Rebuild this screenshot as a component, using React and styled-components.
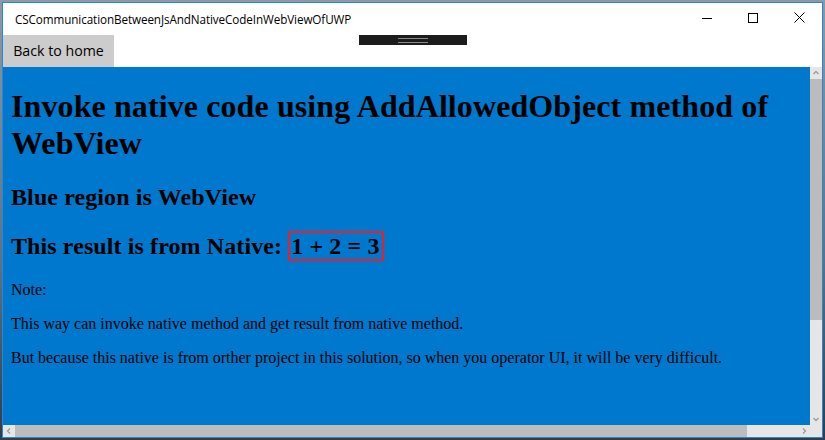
import React from "react";
import styled, { createGlobalStyle } from "styled-components";

const Global = createGlobalStyle`
  html, body { margin: 0; padding: 0; }
  body {
    width: 825px;
    height: 440px;
    overflow: hidden;
    background: linear-gradient(180deg, #8a9aa6 0%, #5d7180 60%, #2f3d48 100%);
  }
`;

const Desk = styled.div`
  width: 825px;
  height: 440px;
  padding: 2px 0 0 2px;
  box-sizing: border-box;
`;

const Window = styled.div`
  position: relative;
  width: 821px;
  height: 436px;
  box-sizing: border-box;
  border: 1px solid #2b87d6;
  background: #ffffff;
  display: grid;
  grid-template-rows: 32px 32px 1fr;
  overflow: hidden;
`;

const TitleBar = styled.div`
  display: flex;
  align-items: center;
  justify-content: space-between;
  background: #ffffff;
`;

const Title = styled.div`
  padding-left: 12px;
  padding-bottom: 1px;
  font-family: "Open Sans", "Noto Sans", sans-serif;
  font-size: 11.7px;
  letter-spacing: -0.1px;
  color: #000;
`;

const Controls = styled.div`
  display: flex;
  height: 100%;
`;

const CtrlBtn = styled.div`
  width: 46px;
  height: 100%;
  display: flex;
  align-items: center;
  justify-content: center;
  padding-bottom: 3px;
  box-sizing: border-box;
`;

const Toolbar = styled.div`
  display: flex;
  align-items: stretch;
  background: #ffffff;
`;

const HomeButton = styled.button`
  border: none;
  margin: 0;
  background: #cccccc;
  width: 111px;
  padding: 0 0 2px 0;
  font-family: "Open Sans", "Noto Sans", sans-serif;
  font-size: 14.2px;
  color: #000;
  text-align: center;
`;

const DebugBar = styled.div`
  position: absolute;
  left: 356px;
  top: 32px;
  width: 108px;
  height: 10px;
  background: #1c1c1c;
  display: flex;
  align-items: center;
  justify-content: center;
`;

const Grip = styled.div`
  width: 30px;
  height: 3px;
  border-top: 1px solid #8a8a8a;
  border-bottom: 1px solid #8a8a8a;
`;

const WebViewFrame = styled.div`
  display: grid;
  grid-template-columns: 1fr 12px;
  grid-template-rows: 1fr 12px;
  min-height: 0;
`;

const WebView = styled.div`
  background: #0078ce;
  overflow: hidden;
  padding: 1px 8px 0 8px;
  font-family: "Liberation Serif", "Times New Roman", serif;
  font-size: 16px;
  color: #000;
`;

const H1 = styled.h1`
  font-size: 32px;
  font-weight: bold;
  margin: 20px 0 21px 0;
  line-height: 37px;
  letter-spacing: 0.1px;
`;

const H2 = styled.h2`
  font-size: 24px;
  font-weight: bold;
  margin: 20px 0;
  line-height: 29px;
  letter-spacing: 0.1px;
`;

const Result = styled.span`
  border: 2px solid #e8202a;
  padding: 0 2px 0 1px;
`;

const P = styled.p`
  margin: 16px 0;
`;

const VScroll = styled.div`
  background: #e6e6e6;
  display: flex;
  flex-direction: column;
`;

const HScroll = styled.div`
  background: #e6e6e6;
  display: flex;
`;

const Arrow = styled.div`
  flex: 0 0 12px;
  display: flex;
  align-items: center;
  justify-content: center;
  height: ${(p) => (p.$v ? "13px" : "auto")};
  width: ${(p) => (p.$v ? "auto" : "12px")};
`;

const Thumb = styled.div`
  background: #bcbcbc;
  flex: ${(p) => p.$size};
`;

const Track = styled.div`
  flex: 1;
`;

const Corner = styled.div`
  background: #e6e6e6;
`;

const Chevron = ({ dir }) => {
  const paths = {
    up: "M1.5 5 L4 2.5 L6.5 5",
    down: "M1.5 3 L4 5.5 L6.5 3",
    left: "M5 1.5 L2.5 4 L5 6.5",
    right: "M3 1.5 L5.5 4 L3 6.5",
  };
  return (
    <svg width="8" height="8" viewBox="0 0 8 8">
      <path d={paths[dir]} fill="none" stroke="#9a9a9a" strokeWidth="1.3" />
    </svg>
  );
};

export default function App() {
  return (
    <>
      <Global />
      <Desk>
        <Window>
          <TitleBar>
            <Title>CSCommunicationBetweenJsAndNativeCodeInWebViewOfUWP</Title>
            <Controls>
              <CtrlBtn>
                <svg width="10" height="10" viewBox="0 0 10 10">
                  <path d="M0 5.5 H10" stroke="#000" strokeWidth="1" />
                </svg>
              </CtrlBtn>
              <CtrlBtn>
                <svg width="10" height="10" viewBox="0 0 10 10">
                  <rect x="0.5" y="0.5" width="9" height="9" fill="none" stroke="#000" strokeWidth="1" />
                </svg>
              </CtrlBtn>
              <CtrlBtn>
                <svg width="11" height="11" viewBox="0 0 11 11">
                  <path d="M0.5 0.5 L10.5 10.5 M10.5 0.5 L0.5 10.5" stroke="#000" strokeWidth="1" />
                </svg>
              </CtrlBtn>
            </Controls>
          </TitleBar>
          <Toolbar>
            <HomeButton>Back to home</HomeButton>
          </Toolbar>
          <DebugBar>
            <Grip />
          </DebugBar>
          <WebViewFrame>
            <WebView>
              <H1>Invoke native code using AddAllowedObject method of WebView</H1>
              <H2>Blue region is WebView</H2>
              <H2>
                This result is from Native: <Result>1 + 2 = 3</Result>
              </H2>
              <P>Note:</P>
              <P>This way can invoke native method and get result from native method.</P>
              <P>
                But because this native is from orther project in this solution, so when you operator UI, it will be very difficult.
              </P>
            </WebView>
            <VScroll>
              <Arrow $v>
                <Chevron dir="up" />
              </Arrow>
              <Thumb $size="0 0 241px" />
              <Track />
              <Arrow $v>
                <Chevron dir="down" />
              </Arrow>
            </VScroll>
            <HScroll>
              <Arrow>
                <Chevron dir="left" />
              </Arrow>
              <Thumb $size="0 0 732px" />
              <Track />
              <Arrow>
                <Chevron dir="right" />
              </Arrow>
            </HScroll>
            <Corner />
          </WebViewFrame>
        </Window>
      </Desk>
    </>
  );
}
